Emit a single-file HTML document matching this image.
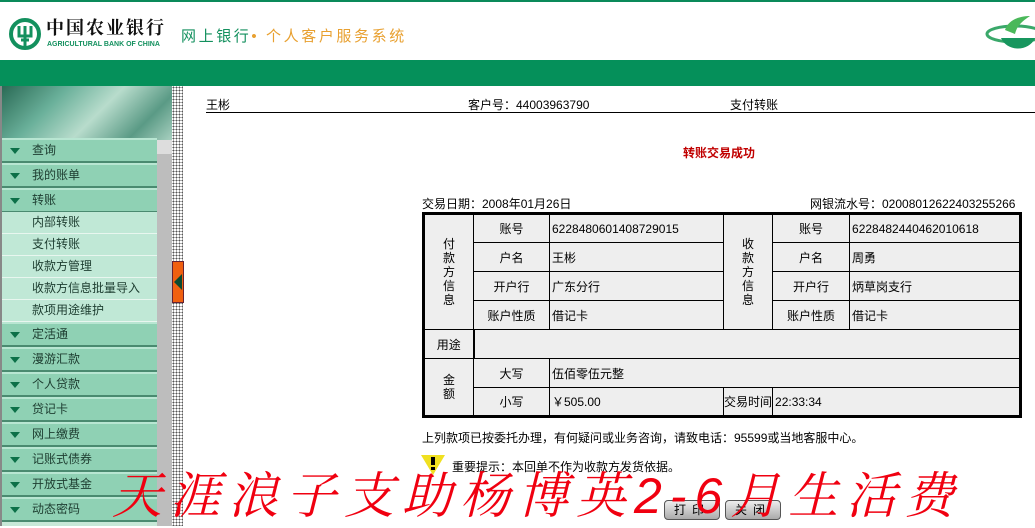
<!DOCTYPE html>
<html><head><meta charset="utf-8"><style>
*{margin:0;padding:0;box-sizing:border-box}
body{width:1035px;height:526px;overflow:hidden;background:#fff;font-family:"Liberation Sans","Noto Sans CJK SC",sans-serif;font-size:12px;color:#000;position:relative}
.abs{position:absolute}
#top{left:0;top:0;width:1035px;height:2px;background:#0a8a5a}
#green{left:0;top:60px;width:1035px;height:26px;background:#05905a}
#side{left:0;top:86px;width:172px;height:440px;background:#c8e8d8;border-left:2px solid #888}
#img{left:2px;top:86px;width:170px;height:54px;background:linear-gradient(135deg,#2a6a55 0%,#6ab09a 30%,#b8dccc 55%,#5a9a85 80%,#a8d0c0 100%)}
.m{position:absolute;left:2px;width:155px;height:25px;background:#8fd1b4;border-bottom:2px solid #4a8a70;border-top:2px solid #b8e6d2;color:#1d3d30;font-size:12px;line-height:20px;padding-left:30px}
.m:before{content:"";position:absolute;left:8px;top:8px;border-left:5px solid transparent;border-right:5px solid transparent;border-top:6px solid #0c7048}
.s{position:absolute;left:2px;width:155px;height:22px;background:#c0e8d6;border-bottom:1px solid #e8f6ef;color:#1d3d30;line-height:21px;padding-left:30px}
#scroll{left:157px;top:140px;width:15px;height:386px;background:#bdbdbd}
#dots{left:172px;top:86px;width:11px;height:440px;background-image:radial-gradient(#555 0.8px,transparent 0.9px);background-size:3px 3px}
#tog{left:172px;top:261px;width:12px;height:42px;background:#f06010;border:1px solid #623}
#tog:after{content:"";position:absolute;left:1px;top:12px;border-top:8px solid transparent;border-bottom:8px solid transparent;border-right:8px solid #0a4a30}
table{position:absolute;left:422px;top:212px;width:600px;border-collapse:collapse;border:3px solid #000;background:#eee}
td{border:1px solid #000;height:29px;font-size:12px;padding:0 2px;white-space:nowrap}
.c{text-align:center}
</style></head><body>
<div class="abs" id="top"></div>
<svg class="abs" style="left:8px;top:17px" width="34" height="34" viewBox="0 0 34 34"><circle cx="17" cy="17" r="14" fill="none" stroke="#13905e" stroke-width="4"/><path d="M11 9v10h12V9M17 9v21M13 23h8" stroke="#13905e" stroke-width="3" fill="none"/></svg>
<div class="abs" style="left:46px;top:16px;font-size:18px;font-weight:bold;letter-spacing:2px;color:#111;font-family:'Noto Serif CJK SC',serif;line-height:22px">中国农业银行</div>
<div class="abs" style="left:47px;top:41px;font-size:7px;font-weight:bold;color:#13905e">AGRICULTURAL BANK OF CHINA</div>
<div class="abs" style="left:181px;top:25px;font-size:15px;letter-spacing:2.6px;color:#13905e">网上银行<span style="color:#e8a030">• 个人客户服务系统</span></div>
<svg class="abs" style="left:985px;top:10px" width="50" height="45" viewBox="0 0 50 45"><ellipse cx="30" cy="24" rx="28" ry="8" fill="none" stroke="#3aa86a" stroke-width="3"/><path d="M20 20C24 8 38 6 45 6 36 12 32 16 30 24z" fill="#4ab85a"/><path d="M16 28C22 42 44 42 50 28z" fill="#18965e"/></svg>
<div class="abs" id="green"></div>
<div class="abs" id="side"></div>
<div class="abs" id="img"></div>
<div class="m" style="top:138px">查询</div>
<div class="m" style="top:163px">我的账单</div>
<div class="m" style="top:188px">转账</div>
<div class="s" style="top:212px">内部转账</div>
<div class="s" style="top:234px">支付转账</div>
<div class="s" style="top:256px">收款方管理</div>
<div class="s" style="top:278px">收款方信息批量导入</div>
<div class="s" style="top:300px">款项用途维护</div>
<div class="m" style="top:322px">定活通</div>
<div class="m" style="top:347px">漫游汇款</div>
<div class="m" style="top:372px">个人贷款</div>
<div class="m" style="top:397px">贷记卡</div>
<div class="m" style="top:422px">网上缴费</div>
<div class="m" style="top:447px">记账式债券</div>
<div class="m" style="top:472px">开放式基金</div>
<div class="m" style="top:497px">动态密码</div>
<div class="abs" id="scroll"></div>
<div class="abs" style="left:157px;top:140px;width:15px;height:14px;background:#ddd"></div>
<div class="abs" id="dots"></div>
<div class="abs" id="tog"></div>
<div class="abs" style="left:206px;top:96px">王彬</div>
<div class="abs" style="left:468px;top:96px">客户号：44003963790</div>
<div class="abs" style="left:730px;top:96px">支付转账</div>
<div class="abs" style="left:206px;top:112px;width:829px;height:1px;background:#000"></div>
<div class="abs" style="left:683px;top:144px;color:#c00000;font-weight:bold;font-size:12px">转账交易成功</div>
<div class="abs" style="left:422px;top:195px">交易日期：2008年01月26日</div>
<div class="abs" style="left:810px;top:195px">网银流水号：02008012622403255266</div>
<table>
<tr><td rowspan="4" class="c" style="width:50px;line-height:14px">付<br>款<br>方<br>信<br>息</td><td class="c" style="width:76px">账号</td><td style="width:174px">6228480601408729015</td><td rowspan="4" class="c" style="width:46px;line-height:14px">收<br>款<br>方<br>信<br>息</td><td class="c" style="width:77px">账号</td><td>6228482440462010618</td></tr>
<tr><td class="c">户名</td><td>王彬</td><td class="c">户名</td><td>周勇</td></tr>
<tr><td class="c">开户行</td><td>广东分行</td><td class="c">开户行</td><td>炳草岗支行</td></tr>
<tr><td class="c">账户性质</td><td>借记卡</td><td class="c">账户性质</td><td>借记卡</td></tr>
<tr><td class="c">用途</td><td colspan="5" style="border-left:2px solid #000"></td></tr>
<tr><td rowspan="2" class="c" style="line-height:14px">金<br>额</td><td class="c">大写</td><td colspan="4">伍佰零伍元整</td></tr>
<tr><td class="c">小写</td><td>￥505.00</td><td class="c" style="padding:0">交易时间</td><td colspan="2">22:33:34</td></tr>
</table>
<div class="abs" style="left:422px;top:429px">上列款项已按委托办理，有何疑问或业务咨询，请致电话：95599或当地客服中心。</div>
<svg class="abs" style="left:421px;top:455px" width="24" height="20"><path d="M0 0H24L12 20z" fill="#f0e020"/><rect x="10" y="2" width="4" height="8" fill="#000"/><rect x="10" y="12" width="4" height="3" fill="#000"/></svg>
<div class="abs" style="left:452px;top:458px">重要提示：本回单不作为收款方发货依据。</div>
<div class="abs" style="left:664px;top:500px;width:56px;height:20px;border:1px solid #555;border-radius:4px;background:linear-gradient(#eee,#aaa);text-align:center;line-height:18px;letter-spacing:6px">打印</div>
<div class="abs" style="left:725px;top:500px;width:56px;height:20px;border:1px solid #555;border-radius:4px;background:linear-gradient(#eee,#aaa);text-align:center;line-height:18px;letter-spacing:6px">关闭</div>
<div class="abs" style="left:112px;top:462px;font-size:50px;font-style:italic;color:#f00010;letter-spacing:8px;white-space:nowrap;font-family:'Noto Serif CJK SC',serif;line-height:60px">天涯浪子支助杨博英<span style="font-family:'Liberation Sans'">2-6</span>月生活费</div>
</body></html>
